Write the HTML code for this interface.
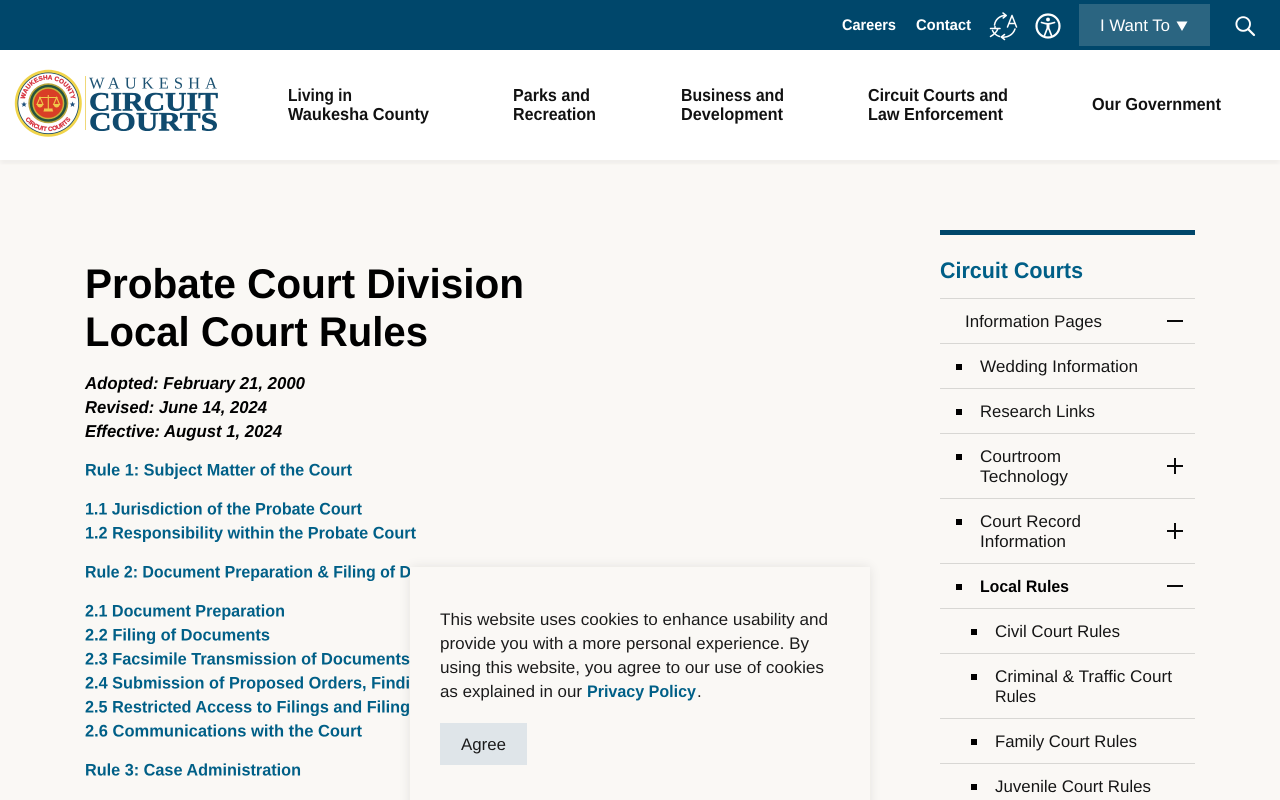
<!DOCTYPE html>
<html lang="en">
<head>
<meta charset="utf-8">
<title>Probate Court Division Local Court Rules</title>
<style>
html,body{margin:0;padding:0;width:1280px;height:800px;overflow:hidden;background:#faf8f5}
svg{display:block}
text{font-family:"Liberation Sans",sans-serif;text-rendering:geometricPrecision}
.nav{font-size:17.4px;font-weight:700;fill:#111}
.top{font-size:15.4px;font-weight:700;fill:#fff}
.lk{font-size:16.8px;font-weight:700;fill:#005f87}
.it{font-size:17.2px;font-weight:700;font-style:italic;fill:#000}
.h1{font-size:41.5px;font-weight:700;fill:#000}
.sd{font-size:16.8px;fill:#141414}
.ck{font-size:16.8px;fill:#1a1a1a}
.ln{stroke:#d8d7d4;stroke-width:1}
.ic{stroke:#0a0a0a;stroke-width:2;fill:none}
.sf{font-family:"Liberation Serif",serif}
</style>
</head>
<body>
<svg width="1280" height="800" viewBox="0 0 1280 800" xmlns="http://www.w3.org/2000/svg">
<defs>
<filter id="hs" x="-5%" y="-20%" width="110%" height="150%"><feGaussianBlur stdDeviation="3"/></filter>
<filter id="cs" x="-10%" y="-10%" width="120%" height="120%"><feGaussianBlur stdDeviation="6"/></filter>
<path id="arcT" d="M24.500 103a23.500 23.500 0 0 1 47 0"/>
<path id="arcB" d="M20 103a28 28 0 0 0 56 0"/>
</defs>
<rect width="1280" height="800" fill="#faf8f5"/>

<!-- header -->
<rect x="0" y="158" width="1280" height="5" fill="#000" opacity=".06" filter="url(#hs)"/>
<rect x="0" y="50" width="1280" height="110" fill="#fff"/>
<rect x="0" y="0" width="1280" height="50" fill="#00476b"/>

<text class="top" x="842" y="30" textLength="54" lengthAdjust="spacingAndGlyphs">Careers</text>
<text class="top" x="916" y="30" textLength="55" lengthAdjust="spacingAndGlyphs">Contact</text>

<!-- translate icon -->
<g fill="none" stroke="#fff" stroke-width="1.500" stroke-linecap="round" stroke-linejoin="round">
<path d="M994.500 25a11 11 0 0 1 11.500-9.500"/>
<path d="M1003 13l3.200 2.500-3 2.500"/>
<path d="M1015 29a12 12 0 0 1-13.500 8"/>
<path d="M1004.500 34.500l-3.200 2.500 3.200 2.500"/>
<path d="M1007.500 27l4.500-11.500 4.500 11.500M1009 23.500h6"/>
<path d="M990.500 28.500h9.500M995 26.500v2M998 28.500c-1 3-3.200 5.500-7.500 8M992.500 30.500c1 2.500 3.500 4.800 7 6"/>
</g>
<!-- accessibility icon -->
<circle cx="1048" cy="26" r="11.500" fill="none" stroke="#fff" stroke-width="2.200"/>
<circle cx="1048" cy="19.500" r="1.900" fill="#fff"/>
<path d="M1041.500 22.500c2.200.8 4.300 1.300 6.500 1.300s4.300-.5 6.500-1.300" fill="none" stroke="#fff" stroke-width="1.700" stroke-linecap="round"/>
<path d="M1048 24v5.500" stroke="#fff" stroke-width="3" fill="none"/>
<path d="M1047 29l-2.500 6.500M1049 29l2.500 6.500" stroke="#fff" stroke-width="1.700" fill="none" stroke-linecap="round"/>

<rect x="1079" y="4" width="131" height="42" fill="#2b6581"/>
<text x="1100" y="31" font-size="16.800" fill="#fff" textLength="70" lengthAdjust="spacingAndGlyphs">I Want To</text>
<path d="M1176.500 21.500h11l-5.500 9.500z" fill="#fff"/>

<circle cx="1243.200" cy="24" r="6.800" fill="none" stroke="#fff" stroke-width="1.900"/>
<path d="M1248 29l6 6" stroke="#fff" stroke-width="2.200" stroke-linecap="round"/>

<!-- logo -->
<circle cx="48.300" cy="103.300" r="33.500" fill="#f0d44a"/>
<circle cx="48.300" cy="103.300" r="30.800" fill="#16486a"/>
<circle cx="48.300" cy="103.300" r="30" fill="#fff"/>
<circle cx="48.300" cy="103.300" r="20" fill="#b9a63c"/>
<circle cx="48.300" cy="103.300" r="18.500" fill="#25543c"/>
<circle cx="48.300" cy="103.300" r="16" fill="#c9b23a"/>
<circle cx="48.300" cy="103.300" r="14.500" fill="#d93e26"/>
<g stroke="#efc94a" stroke-width="1.100" fill="none">
<path d="M39 97.500h18.600M48.300 95v15M43.500 111h9.600"/>
<path d="M40 97.500l-3 7h6zM56.600 97.500l-3 7h6z"/>
</g>
<path d="M37 104.500a3 3 0 0 0 6 0zM53.600 104.500a3 3 0 0 0 6 0zM44 108.500h8.600v2.500h-8.600z" fill="#efc94a"/>
<text font-size="6.400" font-weight="700" fill="#d6303c" stroke="#d6303c" stroke-width=".25"><textPath href="#arcT" startOffset="50%" text-anchor="middle">WAUKESHA COUNTY</textPath></text>
<text font-size="6.200" font-weight="700" fill="#d6303c" stroke="#d6303c" stroke-width=".25"><textPath href="#arcB" startOffset="50%" text-anchor="middle">CIRCUIT COURTS</textPath></text>
<path d="M24 101.500l.8 2 2 .1-1.600 1.300.6 2-1.800-1.100-1.800 1.100.6-2-1.600-1.300 2-.1zM72.500 101.500l.8 2 2 .1-1.600 1.300.6 2-1.800-1.100-1.800 1.100.6-2-1.600-1.300 2-.1z" fill="#1d4f7a"/>
<rect x="85" y="76" width="1" height="54" fill="#f0d878"/>
<text class="sf" x="89" y="88.500" font-size="16.500" fill="#1d5272" textLength="128" lengthAdjust="spacing">WAUKESHA</text>
<text class="sf" x="89" y="110.500" font-size="26.500" font-weight="700" fill="#0f4a6e" stroke="#0f4a6e" stroke-width=".5" textLength="129" lengthAdjust="spacingAndGlyphs">CIRCUIT</text>
<text class="sf" x="89" y="130.500" font-size="26.500" font-weight="700" fill="#0f4a6e" stroke="#0f4a6e" stroke-width=".5" textLength="129" lengthAdjust="spacingAndGlyphs">COURTS</text>

<!-- nav -->
<text class="nav" x="288" y="101" textLength="64" lengthAdjust="spacingAndGlyphs">Living in</text>
<text class="nav" x="288" y="120" textLength="141" lengthAdjust="spacingAndGlyphs">Waukesha County</text>
<text class="nav" x="513" y="101" textLength="77" lengthAdjust="spacingAndGlyphs">Parks and</text>
<text class="nav" x="513" y="120" textLength="83" lengthAdjust="spacingAndGlyphs">Recreation</text>
<text class="nav" x="681" y="101" textLength="103" lengthAdjust="spacingAndGlyphs">Business and</text>
<text class="nav" x="681" y="120" textLength="102" lengthAdjust="spacingAndGlyphs">Development</text>
<text class="nav" x="868" y="101" textLength="140" lengthAdjust="spacingAndGlyphs">Circuit Courts and</text>
<text class="nav" x="868" y="120" textLength="135" lengthAdjust="spacingAndGlyphs">Law Enforcement</text>
<text class="nav" x="1092" y="110" textLength="129" lengthAdjust="spacingAndGlyphs">Our Government</text>

<!-- main -->
<text class="h1" x="85" y="298" textLength="439" lengthAdjust="spacingAndGlyphs">Probate Court Division</text>
<text class="h1" x="85" y="346" textLength="343" lengthAdjust="spacingAndGlyphs">Local Court Rules</text>

<text class="it" x="85" y="389" textLength="220" lengthAdjust="spacingAndGlyphs">Adopted: February 21, 2000</text>
<text class="it" x="85" y="413" textLength="182" lengthAdjust="spacingAndGlyphs">Revised: June 14, 2024</text>
<text class="it" x="85" y="437" textLength="197" lengthAdjust="spacingAndGlyphs">Effective: August 1, 2024</text>

<text class="lk" x="85" y="475.500" textLength="267" lengthAdjust="spacingAndGlyphs">Rule 1: Subject Matter of the Court</text>
<text class="lk" x="85" y="514.500" textLength="277" lengthAdjust="spacingAndGlyphs">1.1 Jurisdiction of the Probate Court</text>
<text class="lk" x="85" y="538.500" textLength="331" lengthAdjust="spacingAndGlyphs">1.2 Responsibility within the Probate Court</text>
<text class="lk" x="85" y="577.500" textLength="326" lengthAdjust="spacingAndGlyphs">Rule 2: Document Preparation &amp; Filing of D</text>
<text class="lk" x="85" y="616.500" textLength="200" lengthAdjust="spacingAndGlyphs">2.1 Document Preparation</text>
<text class="lk" x="85" y="640.500" textLength="185" lengthAdjust="spacingAndGlyphs">2.2 Filing of Documents</text>
<text class="lk" x="85" y="664.500" textLength="325" lengthAdjust="spacingAndGlyphs">2.3 Facsimile Transmission of Documents</text>
<text class="lk" x="85" y="688.500" textLength="325" lengthAdjust="spacingAndGlyphs">2.4 Submission of Proposed Orders, Findi</text>
<text class="lk" x="85" y="712.500" textLength="325" lengthAdjust="spacingAndGlyphs">2.5 Restricted Access to Filings and Filing</text>
<text class="lk" x="85" y="736.500" textLength="277" lengthAdjust="spacingAndGlyphs">2.6 Communications with the Court</text>
<text class="lk" x="85" y="775.500" textLength="216" lengthAdjust="spacingAndGlyphs">Rule 3: Case Administration</text>

<!-- sidebar -->
<rect x="940" y="230" width="255" height="5" fill="#00476b"/>
<text x="940" y="278" font-size="22.500" font-weight="700" fill="#005f87" textLength="143" lengthAdjust="spacingAndGlyphs">Circuit Courts</text>

<path class="ln" d="M940 298.500h255M940 343.500h255M940 388.500h255M940 433.500h255M940 498.500h255M940 563.500h255M940 608.500h255M940 653.500h255M940 718.500h255M940 763.500h255"/>

<text class="sd" x="965" y="327" textLength="137" lengthAdjust="spacingAndGlyphs">Information Pages</text>
<text class="sd" x="980" y="372" textLength="158" lengthAdjust="spacingAndGlyphs">Wedding Information</text>
<text class="sd" x="980" y="417" textLength="115" lengthAdjust="spacingAndGlyphs">Research Links</text>
<text class="sd" x="980" y="462" textLength="81" lengthAdjust="spacingAndGlyphs">Courtroom</text>
<text class="sd" x="980" y="482" textLength="88" lengthAdjust="spacingAndGlyphs">Technology</text>
<text class="sd" x="980" y="527" textLength="101" lengthAdjust="spacingAndGlyphs">Court Record</text>
<text class="sd" x="980" y="547" textLength="86" lengthAdjust="spacingAndGlyphs">Information</text>
<text class="sd" x="980" y="592" font-weight="700" style="fill:#000" textLength="89" lengthAdjust="spacingAndGlyphs">Local Rules</text>
<text class="sd" x="995" y="637" textLength="125" lengthAdjust="spacingAndGlyphs">Civil Court Rules</text>
<text class="sd" x="995" y="682" textLength="177" lengthAdjust="spacingAndGlyphs">Criminal &amp; Traffic Court</text>
<text class="sd" x="995" y="702" textLength="41" lengthAdjust="spacingAndGlyphs">Rules</text>
<text class="sd" x="995" y="747" textLength="142" lengthAdjust="spacingAndGlyphs">Family Court Rules</text>
<text class="sd" x="995" y="792" textLength="156" lengthAdjust="spacingAndGlyphs">Juvenile Court Rules</text>

<g fill="#000">
<rect x="956" y="364" width="6" height="6"/>
<rect x="956" y="409" width="6" height="6"/>
<rect x="956" y="454" width="6" height="6"/>
<rect x="956" y="519" width="6" height="6"/>
<rect x="956" y="584" width="6" height="6"/>
<rect x="971" y="629" width="6" height="6"/>
<rect x="971" y="674" width="6" height="6"/>
<rect x="971" y="739" width="6" height="6"/>
<rect x="971" y="784" width="6" height="6"/>
</g>

<path class="ic" d="M1167 321h16M1167 466h16M1175 458v16M1167 531h16M1175 523v16M1167 586h16"/>

<!-- cookie -->
<rect x="410" y="567" width="460" height="250" fill="#000" opacity=".09" filter="url(#cs)"/>
<rect x="410" y="567" width="460" height="233" fill="#faf8f5"/>
<text class="ck" x="440" y="625" textLength="388" lengthAdjust="spacingAndGlyphs">This website uses cookies to enhance usability and</text>
<text class="ck" x="440" y="649" textLength="369" lengthAdjust="spacingAndGlyphs">provide you with a more personal experience. By</text>
<text class="ck" x="440" y="673" textLength="384" lengthAdjust="spacingAndGlyphs">using this website, you agree to our use of cookies</text>
<text class="ck" x="440" y="697" textLength="142" lengthAdjust="spacingAndGlyphs">as explained in our</text>
<text x="587" y="697" font-size="16.800" font-weight="700" fill="#005f87" textLength="109" lengthAdjust="spacingAndGlyphs">Privacy Policy</text>
<text class="ck" x="697" y="697">.</text>
<rect x="440" y="723" width="87" height="42" fill="#dfe5e9"/>
<text class="ck" x="461" y="750" textLength="45" lengthAdjust="spacingAndGlyphs">Agree</text>
</svg>
</body>
</html>
